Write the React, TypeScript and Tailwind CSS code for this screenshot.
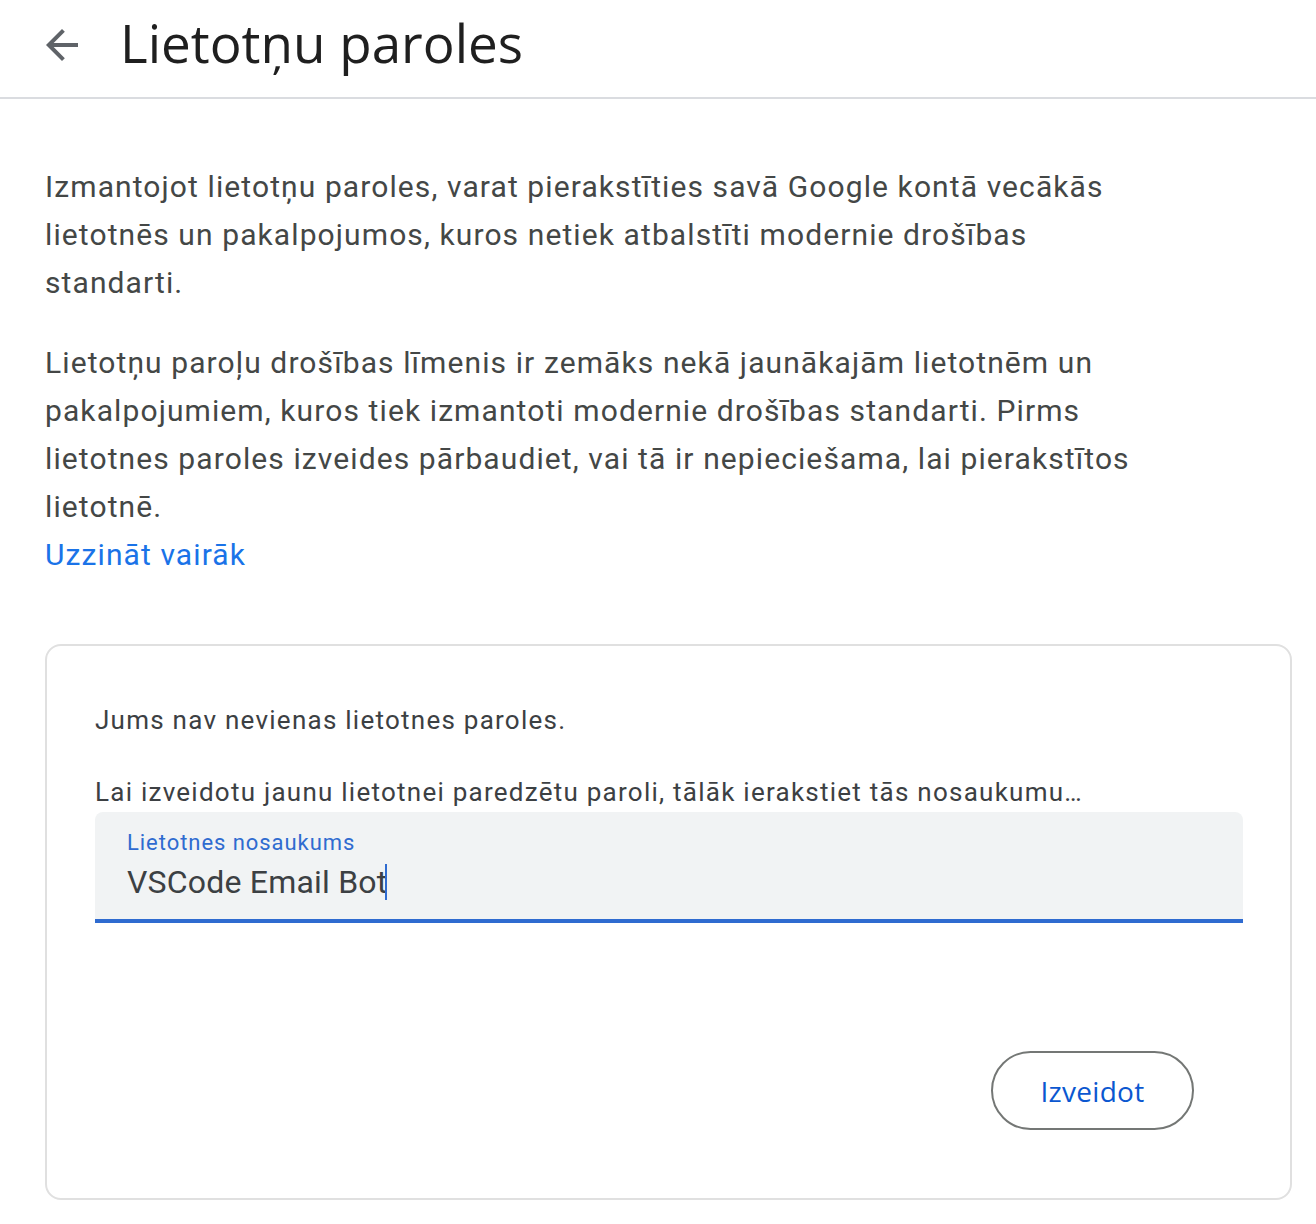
import React from "react";

export default function App() {
  return (
    <div className="w-[1316px] h-[1224px] bg-white overflow-hidden" style={{ fontFamily: "Roboto, 'Liberation Sans', sans-serif" }}>
      <header className="h-[99px] border-b-2 border-[#dadce0] flex items-center">
        <div className="ml-[38px] w-[48px] h-[48px] flex items-center justify-center mb-[8px]">
          <svg width="48" height="48" viewBox="0 0 24 24" fill="#5f6368">
            <path d="M20 11H7.83l5.59-5.59L12 4l-8 8 8 8 1.41-1.41L7.83 13H20v-2z" />
          </svg>
        </div>
        <h1 className="ml-[34px] text-[53px] leading-none text-[#1f1f1f] pb-[12px]" style={{ fontFamily: "'Open Sans', Roboto, sans-serif" }}>
          Lietotņu paroles
        </h1>
      </header>

      <main className="px-[45px]">
        <div className="w-[1240px] text-[30px] leading-[48px] text-[#444746] tracking-[1.1px] pt-[64px]">
          <p>
            Izmantojot lietotņu paroles, varat pierakstīties savā Google kontā vecākās
            <br />
            lietotnēs un pakalpojumos, kuros netiek atbalstīti modernie drošības
            <br />
            standarti.
          </p>
          <p className="mt-[32px]">
            Lietotņu paroļu drošības līmenis ir zemāks nekā jaunākajām lietotnēm un
            <br />
            pakalpojumiem, kuros tiek izmantoti modernie drošības standarti. Pirms
            <br />
            lietotnes paroles izveides pārbaudiet, vai tā ir nepieciešama, lai pierakstītos
            <br />
            lietotnē.
          </p>
          <a className="block text-[#1a73e8]" href="#">Uzzināt vairāk</a>
        </div>

        <section className="mt-[65px] w-[1247px] h-[556px] border-2 border-[#e0e0e0] rounded-[16px] px-[48px] pt-[58px]">
          <p className="text-[26px] leading-[32px] text-[#3c4043] tracking-[1.25px]">Jums nav nevienas lietotnes paroles.</p>
          <p className="mt-[40px] text-[26px] leading-[32px] text-[#3c4043] tracking-[1.25px]">Lai izveidotu jaunu lietotnei paredzētu paroli, tālāk ierakstiet tās nosaukumu…</p>
          <div className="mt-[4px] w-[1148px] h-[111px] bg-[#f1f3f4] rounded-t-[8px] border-b-[4px] border-[#2f6bd0] px-[32px] pt-[18px]">
            <div className="text-[22px] leading-[26px] text-[#2f6bd0] tracking-[0.95px]">Lietotnes nosaukums</div>
            <div className="mt-[6px] flex items-center text-[32px] leading-[40px] text-[#3c4043] tracking-[0.2px]">
              <span>VSCode Email Bot</span>
              <span className="w-[2px] h-[36px] bg-[#2f6bd0] -ml-[2px]"></span>
            </div>
          </div>
          <div className="flex justify-end pr-[48px] mt-[128px]">
            <button className="w-[203px] h-[79px] rounded-full border-2 border-[#747775] text-[28px] text-[#0b57d0] font-medium tracking-[0.3px]" style={{ fontFamily: "'Open Sans', Roboto, sans-serif" }}>
              Izveidot
            </button>
          </div>
        </section>
      </main>
    </div>
  );
}
